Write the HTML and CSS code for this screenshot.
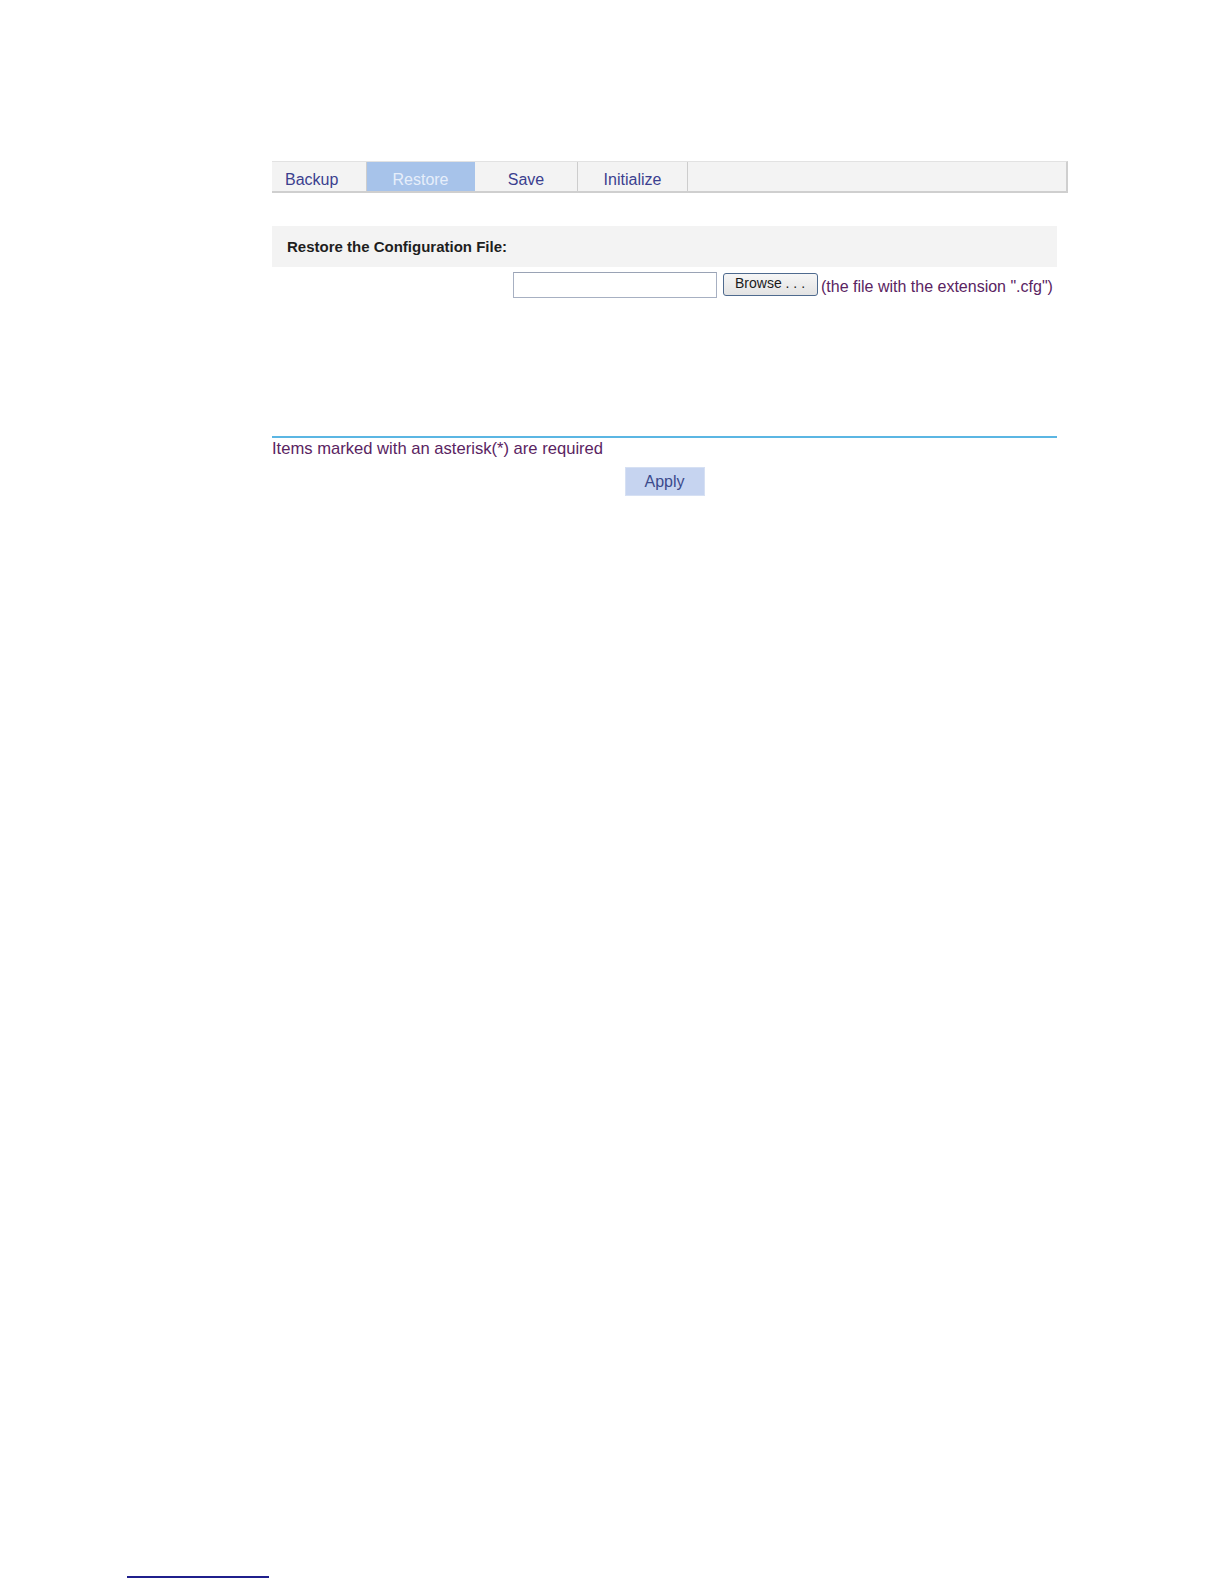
FILE: index.html
```html
<!DOCTYPE html>
<html>
<head>
<meta charset="utf-8">
<title>Restore</title>
<link rel="stylesheet" href="styles.css">
</head>
<body>
<div class="page">
  <div class="panel">
    <div class="tabs">
      <div class="tab tab-backup">Backup</div>
      <div class="tab tab-restore active">Restore</div>
      <div class="tab tab-save">Save</div>
      <div class="tab tab-init">Initialize</div>
      <div class="tab-rest"></div>
    </div>
    <div class="section-head">Restore the Configuration File:</div>
    <div class="file-row">
      <div class="file-input"></div>
      <div class="browse-btn">Browse . . .</div>
      <span class="hint">(the file with the extension ".cfg")</span>
    </div>
    <div class="divider"></div>
    <div class="required">Items marked with an asterisk(*) are required</div>
    <div class="actions">
      <div class="apply-btn">Apply</div>
    </div>
  </div>
  <div class="footnote-rule"></div>
</div>
</body>
</html>
```

FILE: styles.css
```css
html, body {
  margin: 0;
  padding: 0;
  background: #ffffff;
}

.page {
  width: 1224px;
  height: 1584px;
  padding-top: 161px;
  box-sizing: border-box;
  font-family: "Liberation Sans", Arial, sans-serif;
}

.panel {
  margin-left: 272px;
  width: 796px;
}

.tabs {
  display: flex;
  height: 32px;
  box-sizing: border-box;
  background: #f3f3f3;
  border-top: 1px solid #e2e2e2;
  border-bottom: 2px solid #cfcfcf;
  border-right: 2px solid #cfcfcf;
}

.tab {
  display: flex;
  align-items: flex-end;
  justify-content: center;
  padding-bottom: 2px;
  box-sizing: border-box;
  font-size: 16px;
  color: #3b3f8f;
  border-right: 1px solid #cdcdcd;
  background: #f3f3f3;
}

.tab-backup { width: 95px; justify-content: flex-start; padding-left: 13px; }
.tab-restore { width: 108px; }
.tab-save { width: 103px; }
.tab-init { width: 110px; }
.tab-rest { flex: 1; }

.tab.active {
  background: #a7c3ea;
  color: #e6eefa;
  border-right-color: #a7c3ea;
}

.section-head {
  margin-top: 33px;
  width: 785px;
  height: 41px;
  box-sizing: border-box;
  padding-left: 15px;
  line-height: 41px;
  background: #f3f3f3;
  font-size: 15px;
  font-weight: bold;
  color: #1e1e1e;
}

.file-row {
  display: flex;
  align-items: flex-start;
  margin-top: 5px;
  margin-left: 241px;
  height: 26px;
}

.file-input {
  width: 204px;
  height: 26px;
  box-sizing: border-box;
  border: 1px solid #a7b0c2;
  border-top-color: #9aa3b5;
  background: #ffffff;
}

.browse-btn {
  margin-left: 6px;
  margin-top: 1px;
  width: 95px;
  height: 23px;
  box-sizing: border-box;
  border: 1px solid #4e6a8e;
  border-radius: 3px;
  background: linear-gradient(#f6f6f6, #e3e3e3);
  font-size: 14px;
  color: #1a1a1a;
  line-height: 19px;
  padding-left: 11px;
}

.hint {
  margin-left: 3px;
  padding-top: 6px;
  font-size: 16px;
  line-height: 18px;
  color: #5a2462;
}

.divider {
  margin-top: 138px;
  width: 785px;
  height: 2px;
  background: #5bb6e3;
}

.required {
  width: 785px;
  font-size: 16.6px;
  line-height: 18px;
  margin-top: 2px;
  color: #5a2462;
}

.actions {
  width: 785px;
  display: flex;
  justify-content: center;
  margin-top: 9px;
}

.apply-btn {
  width: 80px;
  height: 29px;
  box-sizing: border-box;
  background: #c6d4f0;
  border: 1px solid #d6e0f3;
  font-size: 16px;
  color: #3b4a8c;
  text-align: center;
  line-height: 28px;
}

.footnote-rule {
  margin-top: 1080px;
  margin-left: 127px;
  width: 142px;
  height: 2px;
  background: #1f1f8c;
}
```
